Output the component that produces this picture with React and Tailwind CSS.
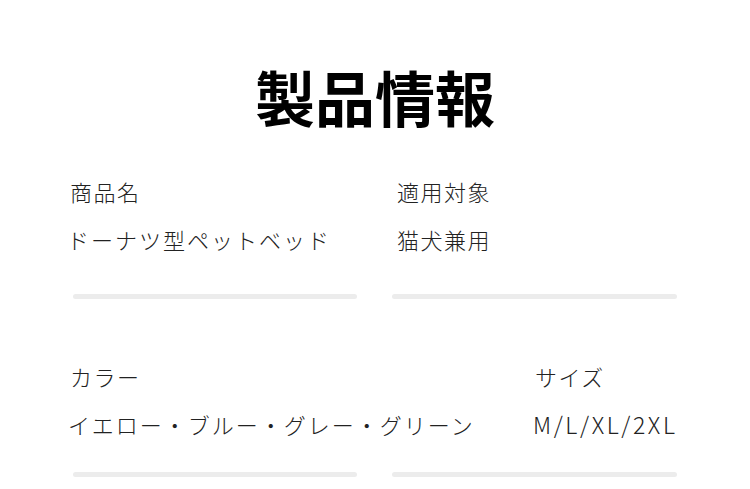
export default function App() {
  const font = { fontFamily: '"Noto Sans CJK JP", "Noto Sans", sans-serif' };
  return (
    <div className="w-[750px] h-[489px] bg-white overflow-hidden text-[#222] font-light" style={font}>
      <div className="pt-[62px] flex justify-center">
        <h1 className="text-[60px] leading-[68px] font-bold text-black">製品情報</h1>
      </div>
      <div className="mt-[37px] flex pl-[67px]">
        <div className="w-[325px]">
          <div className="text-[22px] leading-[48px] pl-[3px] tracking-[1.5px]">商品名</div>
          <div className="text-[22px] leading-[48px] tracking-[2px]">ドーナツ型ペットベッド</div>
        </div>
        <div className="pl-[5px]">
          <div className="text-[22px] leading-[48px] tracking-[1.5px]">適用対象</div>
          <div className="text-[22px] leading-[48px] tracking-[1.5px]">猫犬兼用</div>
        </div>
      </div>
      <div className="mt-[31px] flex pl-[73px] gap-[35px]">
        <div className="w-[284px] h-[5px] rounded-full bg-[#ececec]" />
        <div className="w-[285px] h-[5px] rounded-full bg-[#ececec]" />
      </div>
      <div className="mt-[53px] flex pl-[68px]">
        <div className="w-[465px]">
          <div className="text-[22px] leading-[48px] pl-[2px] tracking-[1.5px]">カラー</div>
          <div className="text-[22px] leading-[48px] tracking-[2px]">イエロー・ブルー・グレー・グリーン</div>
        </div>
        <div>
          <div className="text-[22px] leading-[48px] pl-[2px] tracking-[1.5px]">サイズ</div>
          <div className="text-[23px] leading-[48px] tracking-[2.6px]">M/L/XL/2XL</div>
        </div>
      </div>
      <div className="mt-[24px] flex pl-[73px] gap-[35px]">
        <div className="w-[284px] h-[5px] rounded-full bg-[#ececec]" />
        <div className="w-[285px] h-[5px] rounded-full bg-[#ececec]" />
      </div>
    </div>
  );
}
